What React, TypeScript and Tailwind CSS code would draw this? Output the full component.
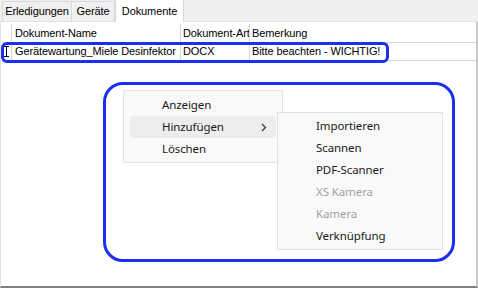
import React from "react";

const gridFont = { fontFamily: '"Liberation Sans", Arial, sans-serif', letterSpacing: "-0.1px" };
const menuFont = { fontFamily: '"Noto Sans", "Open Sans", sans-serif' };

function MenuItem({ label, disabled, active, arrow }: { label: string; disabled?: boolean; active?: boolean; arrow?: boolean }) {
  return (
    <div className={`relative h-[22px] flex items-center mx-[6px] rounded-[4px] ${active ? "bg-[#ededed]" : ""}`}>
      <span className={`pl-[32px] text-[11.5px] whitespace-nowrap ${disabled ? "text-[#a2a2a2]" : "text-[#1a1a1a]"}`}>{label}</span>
      {arrow && (
        <svg className="absolute right-[9px] top-[7px]" width="6" height="9" viewBox="0 0 6 9">
          <path d="M1 1 L4.5 4.5 L1 8" fill="none" stroke="#333" strokeWidth="1.2" />
        </svg>
      )}
    </div>
  );
}

export default function App() {
  return (
    <div className="relative w-[478px] h-[288px] bg-white overflow-hidden flex flex-col" style={gridFont}>
      {/* tab strip */}
      <div className="h-[22px] bg-[#f0f0f0] flex items-end pl-[2px] border-b border-[#e3e3e3] relative">
        <div className="h-[20px] px-[2px] w-[69px] flex items-center justify-center text-[11px] text-black border-t border-l border-[#d9d9d9] whitespace-nowrap">Erledigungen</div>
        <div className="h-[20px] w-[44px] flex items-center justify-center text-[11px] text-black border-t border-l border-r border-[#d9d9d9] whitespace-nowrap">Geräte</div>
        <div className="h-[23px] mb-[-1px] w-[69px] flex items-start justify-center pt-[3px] text-[11px] text-black bg-white border-t border-l border-r border-[#d9d9d9] whitespace-nowrap">Dokumente</div>
      </div>
      {/* panel */}
      <div className="flex-1 border-l border-r-2 border-b-2 border-l-[#e3e3e3] border-r-[#c8c8c8] border-b-[#808080] pt-[2px] pl-[1px]">
        {/* header */}
        <div className="flex h-[19px] border-b border-[#d5d5d5] text-[11px] text-black whitespace-nowrap">
          <div className="w-[10px] border-r border-[#d5d5d5]" />
          <div className="w-[169px] pl-[3px] flex items-center border-r border-[#d5d5d5]">Dokument-Name</div>
          <div className="w-[69px] pl-[2px] flex items-center border-r border-[#d5d5d5] overflow-hidden">Dokument-Art</div>
          <div className="flex-1 pl-[2px] flex items-center">Bemerkung</div>
        </div>
        {/* row */}
        <div className="flex h-[18px] border-b border-[#d5d5d5] text-[11px] text-black whitespace-nowrap">
          <div className="w-[10px] border-r border-[#d5d5d5] flex items-center justify-center">
            <svg width="7" height="11" viewBox="0 0 7 11">
              <path d="M1 0.5 H6 M3.5 0.5 V10.5 M1 10.5 H6" stroke="#000" strokeWidth="1" fill="none" />
            </svg>
          </div>
          <div className="w-[169px] pl-[3px] flex items-center border-r border-[#d5d5d5]">Gerätewartung_Miele Desinfektor</div>
          <div className="w-[69px] pl-[2px] flex items-center border-r border-[#d5d5d5]">DOCX</div>
          <div className="w-[138px] pl-[2px] flex items-center border-r border-[#d5d5d5]">Bitte beachten - WICHTIG!</div>
          <div className="flex-1" />
        </div>
      </div>

      {/* blue highlight around row */}
      <div className="absolute left-[1px] top-[42px] w-[388px] h-[21px] border-[3px] border-[#1a2ff0] rounded-[6px]" />

      {/* blue highlight around menus */}
      <div className="absolute left-[103px] top-[82px] w-[352px] h-[180px] border-[3px] border-[#1a2ff0] rounded-[20px]" />

      {/* context menu */}
      <div className="absolute left-[123px] top-[90px] w-[160px] pt-[3px] pb-[2px] bg-[#f9f9f9] border border-[#e2e2e2]" style={{ ...menuFont, letterSpacing: "-0.1px" }}>
        <MenuItem label="Anzeigen" />
        <MenuItem label="Hinzufügen" active arrow />
        <MenuItem label="Löschen" />
      </div>

      {/* submenu */}
      <div className="absolute left-[277px] top-[112px] w-[166px] py-[2px] bg-[#f9f9f9] border border-[#e2e2e2]" style={{ ...menuFont, letterSpacing: "-0.1px" }}>
        <MenuItem label="Importieren" />
        <MenuItem label="Scannen" />
        <MenuItem label="PDF-Scanner" />
        <MenuItem label="XS Kamera" disabled />
        <MenuItem label="Kamera" disabled />
        <MenuItem label="Verknüpfung" />
      </div>
    </div>
  );
}
